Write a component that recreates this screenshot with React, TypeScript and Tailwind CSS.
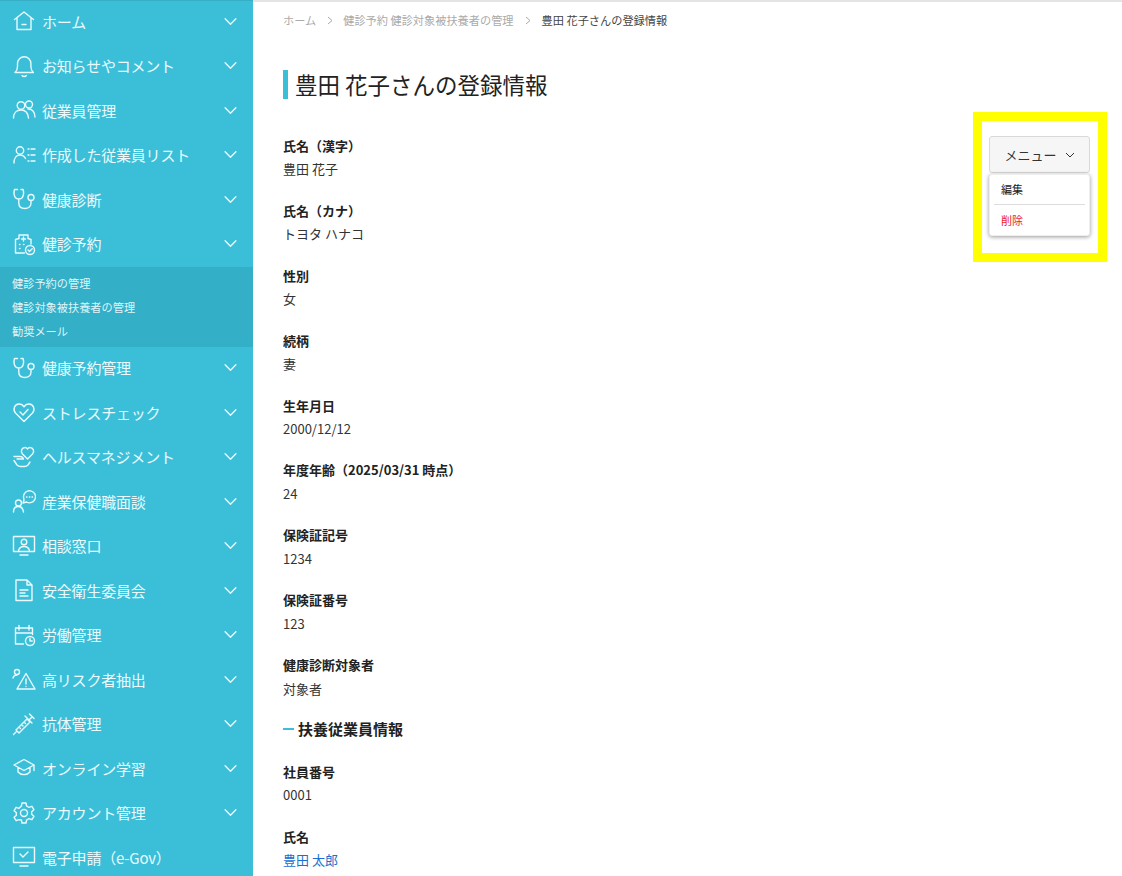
import React from "react";

const S = ({ children }: { children: React.ReactNode }) => (
  <svg viewBox="0 0 24 24" fill="none" stroke="currentColor" strokeWidth="1.400" strokeLinecap="round" strokeLinejoin="round" className="w-[24px] h-[24px] shrink-0 mb-[2px]">
    {children}
  </svg>
);

const icons: Record<string, React.ReactNode> = {
  home: <path d="M2.500 10.500 12 3l9.500 7.500M5 9v11.500h14V9M10 15.500h4" />,
  bell: <path d="M3 18.500c1.800-1.500 2.500-3.200 2.500-6V9.500a6.700 6.700 0 0 1 13.400 0v3c0 2.800.7 4.500 2.500 6ZM10 21.500c1 1.300 3.400 1.300 4.400 0" />,
  users: <><circle cx="9" cy="7.500" r="3.800" /><circle cx="17" cy="6.500" r="3.500" /><path d="M1.500 20c0-5 3-8 7.500-8s7 3 7.500 8M16 11c4-.5 7 3 7 8" /></>,
  userList: <><circle cx="8" cy="7.500" r="3.700" /><path d="M2 20c0-5 2.500-8 6-8s4.500 1.500 5.500 3.500M16 6h1M19 6h4M16 12h1M19 12h4M16 18h1M19 18h4" /></>,
  stetho: <><path d="M5.500 2.500H2.500c-.8 3-.5 6 .8 8 1.500 2 5.500 2 7 0 1.300-2 1.600-5 .8-8H9M6.800 12.500V16c0 3.500 2.500 5.500 6 5.500s6.200-2 6.200-5.500v-2.500" /><circle cx="19" cy="10.500" r="3" /></>,
  reserve: <><path d="M3.500 21V7.500l3.500-1V3h9v3.500l3 1V12M3.500 21h9M11.500 5v4M9.500 7h4M7.500 12.500h.5M7.500 16.500h.5M11.500 12.500h.5" /><circle cx="18" cy="18" r="4.500" /><path d="m16 18 1.500 1.500 2.700-2.800" /></>,
  heart: <><path d="M12 21.500 3.500 13C.5 9.500 2.500 4 7 4c2.200 0 3.800 1 5 2.800C13.200 5 14.800 4 17 4c4.500 0 6.500 5.500 3.500 9Z" /><path d="m8 12 3 3 5-5.500" /></>,
  hand: <><path d="M15.500 14 10.500 9C8 6 10 2.500 13 2.500c1 0 2 .5 2.500 1.500.5-1 1.500-1.500 2.500-1.500 3 0 5 3.500 2.500 6.500Z" /><path d="M2 11.500h6c1.500 0 3 1 3.500 2.500H5M2 15.500l3 4.500c1 1 2 1.500 3.500 1.500h4c1.500 0 2.500-.5 3.500-1.500l2-3" /></>,
  talk: <><circle cx="6.500" cy="14" r="3" /><path d="M1.500 23c0-3.500 2-5.500 5-5.500s4.500 2 5 5.500" /><path d="M11.500 8a6 6 0 1 1 3 5l-3.500 1 1-3Z" /><path d="M14.500 8h.5M17.300 8h.5M20 8h.5" /></>,
  monitor: <><rect x="1.500" y="2.500" width="21" height="15" /><circle cx="12" cy="8" r="2.800" /><path d="M6.500 17c.5-3 2.500-4.500 5.500-4.500s5 1.500 5.500 4.500M8 21h8" /></>,
  doc: <path d="M4 2h11l5 5v15.500H4ZM15 2v5h5M8 12h8M8 15h5M8 18h8" />,
  cal: <><path d="M11.500 21H3.500V5H20.500V11.500M3.500 10H20.500M7 2.500V7M17 2.500V7M11 5h2" /><circle cx="18" cy="18" r="4.500" /><path d="M18 15.500V18h2.200" /></>,
  risk: <><circle cx="5" cy="5" r="2.500" /><path d="M1 11c.5-2 2-3 4-3M14 6.500 23 22H5ZM14 12v5M14 19.500v.1" /></>,
  syringe: <path d="M1.500 22.500 5 19M5 19l-1 -1L15 7l3 3L7 21ZM13 4l7 7M17.500 2l4.500 4.500M16.500 8.500l3.500-3.500M12 10l1.500 1.500M9.500 12.500l1.500 1.500M7 15l1.500 1.500" />,
  grad: <path d="M12 3.500 2 9l10 5.500L22 9ZM6 11.500V16c3 3.500 9 3.500 12 0v-4.500M22 9v5.500" />,
  gear: <><circle cx="12" cy="12" r="3.500" /><path d="M10 2h4l.6 3 2.400 1.300 2.900-1 2 3.400-2.300 2a7 7 0 0 1 0 2.600l2.300 2-2 3.400-2.900-1-2.400 1.300-.6 3h-4l-.6-3L7 18.700l-2.900 1-2-3.400 2.300-2a7 7 0 0 1 0-2.600l-2.300-2 2-3.400 2.900 1L9.400 5Z" /></>,
  screen: <><rect x="1.500" y="2.500" width="21" height="15" /><path d="m8 9 3 3 5-5M8 21h8" /></>,
};

const Row = ({ icon, label }: { icon: string; label: string }) => (
  <div className="h-[44.500px] flex items-center pl-[12px] pr-[15px] text-[#eafafd]">
    <S>{icons[icon]}</S>
    <span className="ml-[6px] text-[15px] leading-none flex-1 whitespace-nowrap tracking-[-0.2px] pb-[2px]">{label}</span>
    {label.startsWith("電子") ? null : (
      <svg viewBox="0 0 16 10" fill="none" stroke="currentColor" strokeWidth="1.500" strokeLinecap="round" strokeLinejoin="round" className="w-[15px] h-[9px] mb-[2px]">
        <path d="m2 2 6 6 6-6" />
      </svg>
    )}
  </div>
);

const Field = ({ label, children }: { label: string; children: React.ReactNode }) => (
  <div className="h-[64.900px]">
    <div className="text-[13px] leading-[24px] font-bold text-[#222]">{label}</div>
    <div className="text-[13px] leading-[24px] -mt-[0.6px] text-[#333]">{children}</div>
  </div>
);

const Sep = ({ className }: { className: string }) => (
  <svg viewBox="0 0 6 9" fill="none" stroke="#aaa" strokeWidth="1" className={`w-[6px] h-[9px] ${className}`}>
    <path d="m1 1 4 3.500-4 3.500" />
  </svg>
);

const top = [
  ["home", "ホーム"],
  ["bell", "お知らせやコメント"],
  ["users", "従業員管理"],
  ["userList", "作成した従業員リスト"],
  ["stetho", "健康診断"],
  ["reserve", "健診予約"],
];
const rest = [
  ["stetho", "健康予約管理"],
  ["heart", "ストレスチェック"],
  ["hand", "ヘルスマネジメント"],
  ["talk", "産業保健職面談"],
  ["monitor", "相談窓口"],
  ["doc", "安全衛生委員会"],
  ["cal", "労働管理"],
  ["risk", "高リスク者抽出"],
  ["syringe", "抗体管理"],
  ["grad", "オンライン学習"],
  ["gear", "アカウント管理"],
  ["screen", "電子申請（e-Gov）"],
];

export default function App() {
  return (
    <div
      className="relative flex h-[876px] w-[1122px] overflow-hidden bg-white"
      style={{ fontFamily: '"Noto Sans CJK JP", "Noto Sans", sans-serif' }}
    >
      <aside className="w-[253px] shrink-0 bg-[#3bbfd9] shadow-[inset_0_1px_0_#35aec6]">
        {top.map(([i, l]) => <Row key={l} icon={i} label={l} />)}
        <div className="h-[79.500px] bg-[#34afc8] pt-[3.500px] pl-[12px] text-[11.200px] leading-[24px] text-[#dff5f9]">
          <div>健診予約の管理</div>
          <div>健診対象被扶養者の管理</div>
          <div>勧奨メール</div>
        </div>
        {rest.map(([i, l]) => <Row key={l} icon={i} label={l} />)}
      </aside>

      <main className="flex-1 border-t-2 border-[#e4e4e4] pl-[30px]">
        <nav className="flex items-center h-[36px] text-[11.200px] text-[#aaa] whitespace-nowrap">
          <span>ホーム</span>
          <Sep className="ml-[10.500px] mr-[10.500px]" />
          <span>健診予約 健診対象被扶養者の管理</span>
          <Sep className="ml-[11px] mr-[11px]" />
          <span className="text-[#444]">豊田 花子さんの登録情報</span>
        </nav>
        <h1 className="mt-[32px] h-[29px] border-l-[5px] border-[#3bbfd9] pl-[7px] text-[22.500px] leading-[29px] font-normal text-[#222] whitespace-nowrap">
          豊田 花子さんの登録情報
        </h1>
        <div className="mt-[35px]">
          <Field label="氏名（漢字）">豊田 花子</Field>
          <Field label="氏名（カナ）">トヨタ ハナコ</Field>
          <Field label="性別">女</Field>
          <Field label="続柄">妻</Field>
          <Field label="生年月日">2000/12/12</Field>
          <Field label="年度年齢（2025/03/31 時点）">24</Field>
          <Field label="保険証記号">1234</Field>
          <Field label="保険証番号">123</Field>
          <Field label="健康診断対象者">対象者</Field>
        </div>
        <div className="flex items-center h-[24px] -mt-[1px] mb-[19px]">
          <span className="w-[11px] h-[2px] bg-[#3bbfd9] mr-[4px]" />
          <span className="text-[15px] font-bold text-[#222]">扶養従業員情報</span>
        </div>
        <Field label="社員番号">0001</Field>
        <Field label="氏名"><span className="text-[#1a6fd0]">豊田 太郎</span></Field>
      </main>

      <div className="absolute left-[973px] top-[112px] w-[134px] h-[150px] border-[9px] border-[#ffff00] pt-[15px] pl-[7px]">
        <button className="w-[101px] h-[37px] flex items-center justify-center gap-[8px] rounded-[3px] border border-[#d9d9d9] bg-[#f6f6f6] text-[13px] text-[#333]">
          メニュー
          <svg viewBox="0 0 10 6" fill="none" stroke="currentColor" strokeWidth="1" className="w-[10px] h-[6px]">
            <path d="m1 1 4 4 4-4" />
          </svg>
        </button>
        <div className="mt-px w-[101px] h-[62px] rounded-[3px] bg-white border border-[#eee] shadow-[0_1px_4px_rgba(0,0,0,0.4)] text-[11px]">
          <div className="h-[29px] leading-[28px] pl-[11px] text-[#222]">編集</div>
          <div className="mx-[4px] h-px bg-[#ddd]" />
          <div className="h-[30px] leading-[30px] pl-[11px] text-[#e8221d]">削除</div>
        </div>
      </div>
    </div>
  );
}
